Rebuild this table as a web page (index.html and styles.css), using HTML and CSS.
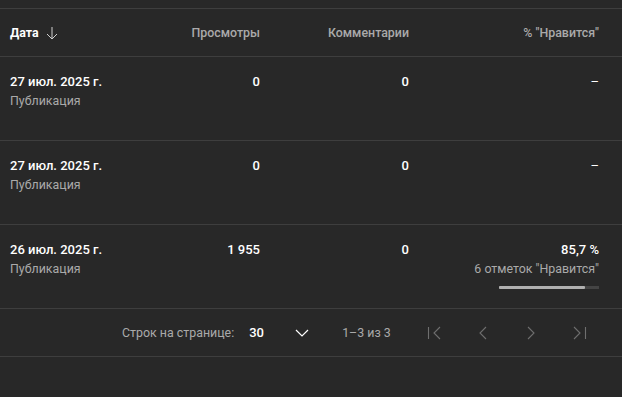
FILE: index.html
```html
<!DOCTYPE html>
<html lang="ru">
<head>
<meta charset="utf-8">
<link rel="stylesheet" href="styles.css">
</head>
<body>
<div class="table">
  <div class="row head">
    <div class="cell date-h">Дата
      <svg class="sort" width="12" height="14" viewBox="0 0 12 14"><path d="M6 1v12M1 8l5 5 5-5" fill="none" stroke="#cfcfcf" stroke-width="1"/></svg>
    </div>
    <div class="cell num">Просмотры</div>
    <div class="cell num">Комментарии</div>
    <div class="cell num">% "Нравится"</div>
  </div>
  <div class="row">
    <div class="cell"><div class="main">27 июл. 2025 г.</div><div class="sub">Публикация</div></div>
    <div class="cell num"><div class="main">0</div></div>
    <div class="cell num"><div class="main">0</div></div>
    <div class="cell num"><div class="main dash">–</div></div>
  </div>
  <div class="row">
    <div class="cell"><div class="main">27 июл. 2025 г.</div><div class="sub">Публикация</div></div>
    <div class="cell num"><div class="main">0</div></div>
    <div class="cell num"><div class="main">0</div></div>
    <div class="cell num"><div class="main dash">–</div></div>
  </div>
  <div class="row">
    <div class="cell"><div class="main">26 июл. 2025 г.</div><div class="sub">Публикация</div></div>
    <div class="cell num"><div class="main">1 955</div></div>
    <div class="cell num"><div class="main">0</div></div>
    <div class="cell num likes">
      <div class="main">85,7 %</div>
      <div class="sub">6 отметок "Нравится"</div>
      <div class="bar"><div class="fill" style="width:85.7%"></div></div>
    </div>
  </div>
  <div class="footer">
    <span class="label">Строк на странице:</span>
    <div class="select"><span class="val">30</span>
      <svg width="14" height="8" viewBox="0 0 14 8"><path d="M1 1l6 6 6-6" fill="none" stroke="#fff" stroke-width="1.2"/></svg>
    </div>
    <span class="range">1–3 из 3</span>
    <div class="nav">
      <span class="btn"><svg width="16" height="14" viewBox="0 0 16 14"><path d="M1.5 1v12M13 1L7 7l6 6" fill="none" stroke="#6f6f6f" stroke-width="1.1"/></svg></span>
      <span class="btn"><svg width="16" height="14" viewBox="0 0 16 14"><path d="M11 1L5 7l6 6" fill="none" stroke="#6f6f6f" stroke-width="1.1"/></svg></span>
      <span class="btn"><svg width="16" height="14" viewBox="0 0 16 14"><path d="M5 1l6 6-6 6" fill="none" stroke="#6f6f6f" stroke-width="1.1"/></svg></span>
      <span class="btn"><svg width="16" height="14" viewBox="0 0 16 14"><path d="M3 1l6 6-6 6M14.5 1v12" fill="none" stroke="#6f6f6f" stroke-width="1.1"/></svg></span>
    </div>
  </div>
</div>
</body>
</html>
```
FILE: styles.css
```css
html, body {
  margin: 0;
  padding: 0;
  background: #282828;
}
body {
  font-family: Roboto, "Noto Sans", sans-serif;
  color: #fff;
  height: 397px;
  overflow: hidden;
}
.table {
  margin-top: 8px;
  border-top: 1px solid #3e3e3e;
}
.row {
  display: grid;
  grid-template-columns: 150px 100px 149px 190px;
  padding-left: 10px;
  height: 83px;
  border-bottom: 1px solid #3e3e3e;
  align-items: start;
}
.row.head {
  height: 47px;
  align-items: center;
  font-size: 12.4px;
  font-weight: 500;
  color: #aaa;
}
.cell.num {
  text-align: right;
}
.date-h {
  color: #fff;
  font-weight: 700;
  display: flex;
  align-items: center;
  gap: 6px;
}
.sort {
  display: block;
  margin-left: 1px;
}
.main {
  margin-top: 17px;
  font-size: 13px;
  font-weight: 500;
  line-height: 16px;
  color: #fff;
}
.dash {
  font-weight: 400;
}
.sub {
  margin-top: 3px;
  font-size: 12.4px;
  line-height: 16px;
  color: #aaa;
}
.likes {
  display: flex;
  flex-direction: column;
  align-items: flex-end;
}
.bar {
  margin-top: 9px;
  width: 100px;
  height: 3px;
  background: #444;
}
.fill {
  height: 100%;
  background: #b0b0b0;
  border-radius: 1px;
}
.footer {
  display: flex;
  align-items: center;
  height: 47px;
  border-bottom: 1px solid #3e3e3e;
  padding-left: 122px;
  font-size: 12.4px;
  color: #aaa;
}
.select {
  display: flex;
  align-items: center;
  margin-left: 15px;
  width: 60px;
  justify-content: space-between;
}
.val {
  color: #fff;
  font-size: 13px;
  font-weight: 500;
}
.range {
  margin-left: 33px;
  font-size: 12.4px;
}
.nav {
  display: flex;
  margin-left: 20px;
}
.btn {
  width: 48px;
  height: 36px;
  display: flex;
  align-items: center;
  justify-content: center;
}
```
